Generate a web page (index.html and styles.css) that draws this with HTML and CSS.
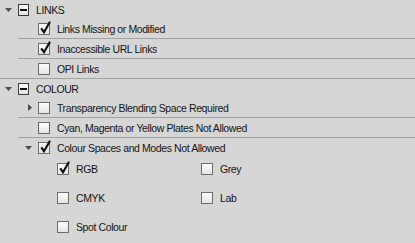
FILE: index.html
```html
<!DOCTYPE html>
<html lang="en">
  <head>
    <meta charset="UTF-8" />
    <title>Preflight Profile</title>
    <link rel="stylesheet" href="styles.css">
  </head>
  <body>
    <div class="panel">
      <div class="group">
        <div class="head">
          <span class="twisty"><svg width="7" height="4" viewBox="0 0 7 4"><path d="M0 0H7L3.5 4Z" /></svg></span>
          <span class="minus"></span>
          <span>LINKS</span>
        </div>
        <div class="item">
          <span class="slot"></span>
          <span class="cb on"></span>
          <span>Links Missing or Modified</span>
        </div>
        <div class="item">
          <span class="slot"></span>
          <span class="cb on"></span>
          <span>Inaccessible URL Links</span>
        </div>
        <div class="item">
          <span class="slot"></span>
          <span class="cb"></span>
          <span>OPI Links</span>
        </div>
      </div>
      <div class="group">
        <div class="head">
          <span class="twisty"><svg width="7" height="4" viewBox="0 0 7 4"><path d="M0 0H7L3.5 4Z" /></svg></span>
          <span class="minus"></span>
          <span>COLOUR</span>
        </div>
        <div class="item">
          <span class="slot right"><svg width="4" height="7" viewBox="0 0 4 7"><path d="M0 0V7L4 3.5Z" /></svg></span>
          <span class="cb"></span>
          <span>Transparency Blending Space Required</span>
        </div>
        <div class="item">
          <span class="slot"></span>
          <span class="cb"></span>
          <span>Cyan, Magenta or Yellow Plates Not Allowed</span>
        </div>
        <div class="item open">
          <span class="slot"><svg width="7" height="4" viewBox="0 0 7 4"><path d="M0 0H7L3.5 4Z" /></svg></span>
          <span class="cb on"></span>
          <span>Colour Spaces and Modes Not Allowed</span>
        </div>
        <div class="options">
          <div class="opt"><span class="cb on"></span><span>RGB</span></div>
          <div class="opt"><span class="cb"></span><span>Grey</span></div>
          <div class="opt"><span class="cb"></span><span>CMYK</span></div>
          <div class="opt"><span class="cb"></span><span>Lab</span></div>
          <div class="opt"><span class="cb"></span><span>Spot Colour</span></div>
        </div>
      </div>
    </div>
  </body>
</html>
```

FILE: styles.css
```css
body {
  margin: 0;
  background: #d6d6d6;
  font-family: "Liberation Sans", Arial, sans-serif;
  font-size: 10.5px;
  letter-spacing: -0.4px;
  color: #141414;
}

.group {
  border-bottom: 1px solid #a2a2a2;
}

.group:last-child {
  border-bottom: none;
}

.head {
  display: flex;
  align-items: center;
  height: 19px;
}

.twisty {
  display: flex;
  margin-left: 5px;
  width: 7px;
  margin-right: 6px;
}

.head .minus {
  margin-right: 7px;
}

svg path {
  fill: #4c4c4c;
}

.minus {
  box-sizing: border-box;
  width: 11px;
  height: 12px;
  border: 1px solid #3a3a3a;
  background: linear-gradient(#fafafa, #e4e4e4);
  display: flex;
  align-items: center;
  justify-content: center;
}

.minus::before {
  content: "";
  width: 7px;
  height: 2px;
  background: #111;
}

.item {
  display: flex;
  align-items: center;
  height: 19px;
  margin-left: 18px;
  border-bottom: 1px solid #a2a2a2;
}

.item:last-child,
.item.open {
  border-bottom: none;
}

.slot {
  display: flex;
  justify-content: center;
  width: 20px;
}

.slot.right {
  padding-left: 4px;
  box-sizing: border-box;
}

.cb {
  position: relative;
  box-sizing: border-box;
  width: 12px;
  height: 12px;
  margin-right: 7px;
  border: 1px solid #6c6c6c;
  background: linear-gradient(#fdfdfd, #e5e5e5);
  flex-shrink: 0;
}

.cb.on::after {
  content: "";
  position: absolute;
  left: 1px;
  top: -3px;
  width: 11px;
  height: 13px;
  background: url("data:image/svg+xml,%3Csvg xmlns='http://www.w3.org/2000/svg' width='11' height='13' viewBox='0 0 11 13'%3E%3Cpath d='M1.2 7.4L4 11.2L10 0.8' fill='none' stroke='%23111' stroke-width='2.2'/%3E%3C/svg%3E") no-repeat;
}

.options {
  display: grid;
  grid-template-columns: 144px 144px;
  row-gap: 9px;
  padding: 2px 0 6px 57px;
}

.opt {
  display: flex;
  align-items: center;
  height: 20px;
}
```
